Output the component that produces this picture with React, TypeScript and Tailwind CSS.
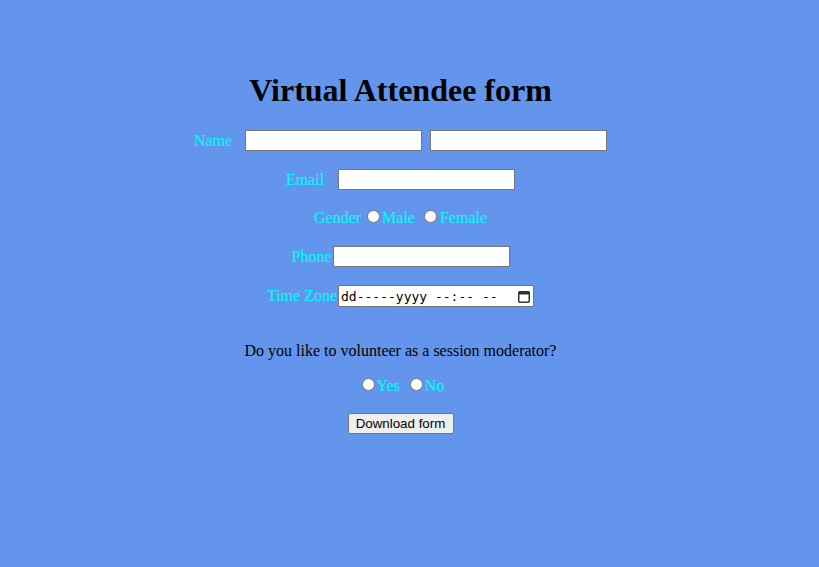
import React from "react";

const serif = "font-['Liberation_Serif',serif]";

const Radio: React.FC<{ name: string; className?: string }> = ({ name, className }) => (
  <input
    type="radio"
    name={name}
    className={`m-0 mb-[2px] h-[13px] w-[13px] shrink-0 appearance-none rounded-full border border-[#767676] bg-white checked:border-[4px] checked:border-[#0075ff] ${className ?? ""}`}
  />
);

const TextBox: React.FC<{ className?: string }> = ({ className }) => (
  <input
    type="text"
    className={`h-[21px] w-[177px] border border-[#767676] bg-white px-[2px] text-[13px] outline-none ${className ?? ""}`}
  />
);

const App: React.FC = () => {
  return (
    <div className={`min-h-[567px] w-full bg-[#6495ed] ${serif} text-[16px]`}>
      <div className="flex w-[801px] flex-col items-center pt-[72px]">
        <h1 className="text-[32px] font-bold leading-[37px] text-black">Virtual Attendee form</h1>

        <div className="mt-[21px] flex h-[21px] items-center text-[#00ffff]">
          <span>Name</span>
          <TextBox className="ml-[13px]" />
          <TextBox className="ml-[8px]" />
        </div>

        <div className="mt-[18px] flex h-[21px] items-center text-[#00ffff]">
          <span>Email</span>
          <TextBox className="ml-[14px]" />
        </div>

        <div className="mt-[17px] flex h-[21px] items-center text-[#00ffff]">
          <span>Gender</span>
          <Radio name="gender" className="ml-[6px]" />
          <span className="ml-[2px]">Male</span>
          <Radio name="gender" className="ml-[9px]" />
          <span className="ml-[3px]">Female</span>
        </div>

        <div className="mt-[18px] flex h-[21px] items-center text-[#00ffff]">
          <span>Phone</span>
          <TextBox className="ml-[1px]" />
        </div>

        <div className="mt-[18px] flex h-[22px] items-center text-[#00ffff]">
          <span>Time Zone</span>
          <div className="ml-[1px] flex h-[22px] w-[196px] items-center border border-[#767676] bg-white pl-[2px] pr-[3px] text-black">
            <span className="font-['DejaVu_Sans_Mono',monospace] text-[13px] leading-none whitespace-pre">dd-----yyyy --:-- --</span>
            <svg className="ml-auto" width="12" height="13" viewBox="0 0 12 13">
              <rect x="0.75" y="1.75" width="10.5" height="10.5" rx="1.2" fill="none" stroke="#333" strokeWidth="1.5" />
              <rect x="0.5" y="1.5" width="11" height="3" fill="#333" />
            </svg>
          </div>
        </div>

        <p className="mt-[33px] leading-[21px] text-black">Do you like to volunteer as a session moderator?</p>

        <div className="mt-[14px] flex h-[21px] items-center text-[#00ffff]">
          <Radio name="vol" className="ml-[5px]" />
          <span className="ml-[2px]">Yes</span>
          <Radio name="vol" className="ml-[10px]" />
          <span className="ml-[2px]">No</span>
        </div>

        <button
          type="button"
          className="mt-[17px] h-[21px] w-[106px] rounded-[2px] border border-[#767676] bg-[#efefef] font-['Liberation_Sans',sans-serif] text-[13.33px] leading-none text-black"
        >
          Download form
        </button>
      </div>
    </div>
  );
};

export default App;
